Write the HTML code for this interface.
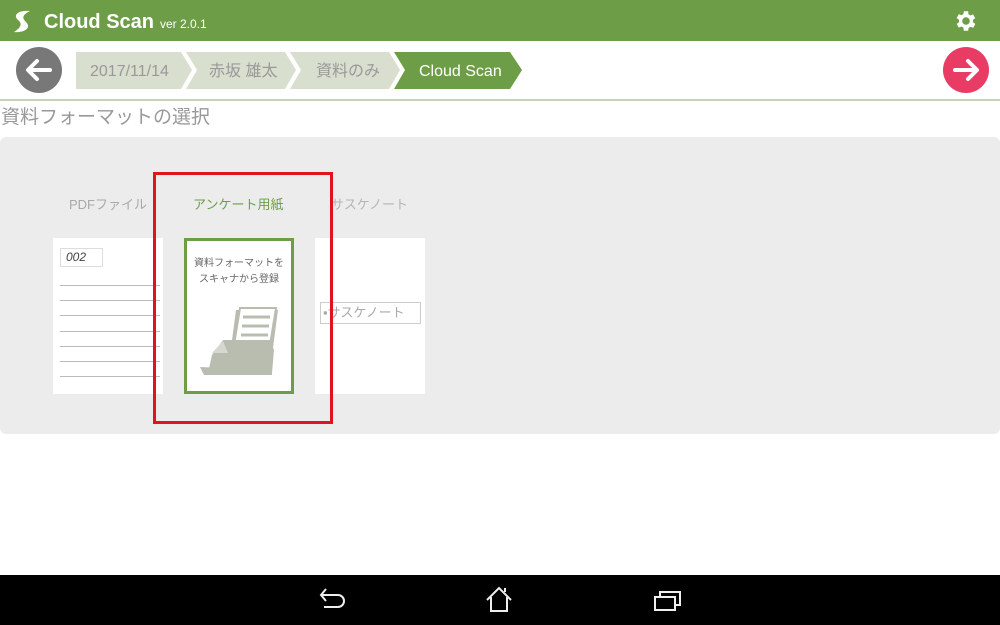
<!DOCTYPE html>
<html><head><meta charset="utf-8"><style>
*{margin:0;padding:0;box-sizing:border-box}
body{width:1000px;height:625px;position:relative;background:#fff;font-family:"Liberation Sans","Noto Sans CJK JP",sans-serif;overflow:hidden}
.abs{position:absolute}
</style></head><body>
<div class="abs" style="left:0;top:0;width:1000px;height:41px;background:#6d9e47"></div>
<svg class="abs" style="left:8px;top:9px" width="28" height="26" viewBox="0 0 28 26"><path d="M22 2 C12 1 4 5 10 11 C14 14 14 18 6 23 C16 24 24 19 18 13 C14 9 14 6 22 2Z" fill="#fff"/></svg>
<div class="abs" style="left:44px;top:10px;color:#fff;font-weight:bold;font-size:20px;line-height:24px">Cloud Scan</div>
<div class="abs" style="left:160px;top:16px;color:#fff;font-size:12px;line-height:16px">ver 2.0.1</div>
<svg class="abs" style="left:953px;top:8px" width="26" height="26" viewBox="0 0 24 24"><path fill="#fff" d="M19.4 13a7.5 7.5 0 0 0 0-2l2.1-1.6-2-3.5-2.5 1a7 7 0 0 0-1.7-1L15 3h-4l-.4 2.7a7 7 0 0 0-1.7 1l-2.5-1-2 3.5L6.6 11a7.5 7.5 0 0 0 0 2l-2.2 1.6 2 3.5 2.5-1a7 7 0 0 0 1.700 1L11 21h4l.4-2.7a7 7 0 0 0 1.7-1l2.5 1 2-3.5zM13 15.5a3.5 3.5 0 1 1 0-7 3.5 3.5 0 0 1 0 7z" transform="translate(-1 0)"/></svg>
<svg class="abs" style="left:0;top:44px" width="1000" height="60">
<circle cx="39" cy="26" r="23" fill="#787878"/>
<path d="M50 26H29M37 17l-9 9 9 9" stroke="#fff" stroke-width="4" fill="none" stroke-linecap="round" stroke-linejoin="round"/>
<polygon points="76,8 181,8 192,26 181,45 76,45" fill="#d8dfcf"/>
<polygon points="186,8 285,8 296,26 285,45 186,45 197,26" fill="#d8dfcf"/>
<polygon points="290,8 389,8 400,26 389,45 290,45 301,26" fill="#d8dfcf"/>
<polygon points="394,8 510,8 522,26 510,45 394,45 405,26" fill="#6d9e47"/>
<text x="90" y="32" font-size="16" fill="#999" font-family="Liberation Sans">2017/11/14</text>
<text x="209" y="32" font-size="16" fill="#999" font-family="Liberation Sans,Noto Sans CJK JP">赤坂 雄太</text>
<text x="316" y="32" font-size="16" fill="#999" font-family="Liberation Sans,Noto Sans CJK JP">資料のみ</text>
<text x="419" y="32" font-size="16" fill="#fff" font-family="Liberation Sans">Cloud Scan</text>
<circle cx="966" cy="26" r="23" fill="#e83c64"/>
<path d="M955 26h21M968 17l9 9-9 9" stroke="#fff" stroke-width="4" fill="none" stroke-linecap="round" stroke-linejoin="round"/>
<rect x="0" y="55" width="1000" height="2" fill="#c5d3b8"/>
</svg>
<div class="abs" style="left:1px;top:105px;font-size:19px;color:#999;line-height:26px">資料フォーマットの選択</div>
<div class="abs" style="left:0;top:137px;width:1000px;height:297px;background:#ececec;border-radius:6px"></div>
<div class="abs" style="left:69px;top:194px;font-size:13px;color:#a9a9a9">PDFファイル</div>
<div class="abs" style="left:193px;top:194px;font-size:13px;color:#6d9e47">アンケート用紙</div>
<div class="abs" style="left:331px;top:194px;font-size:13px;color:#b5b5b5">サスケノート</div>
<div class="abs" style="left:53px;top:238px;width:110px;height:156px;background:#fff"></div>
<div class="abs" style="left:60px;top:248px;width:43px;height:19px;border:1px solid #ddd;font-size:12px;font-style:italic;color:#444;padding-left:5px;line-height:17px">002</div>
<svg class="abs" style="left:60px;top:285px" width="100" height="95"><g stroke="#bbb" stroke-width="1"><line x1="0" y1="0.5" x2="100" y2="0.5"/><line x1="0" y1="15.5" x2="100" y2="15.5"/><line x1="0" y1="30.5" x2="100" y2="30.5"/><line x1="0" y1="46.5" x2="100" y2="46.5"/><line x1="0" y1="61.5" x2="100" y2="61.5"/><line x1="0" y1="76.5" x2="100" y2="76.5"/><line x1="0" y1="91.5" x2="100" y2="91.5"/></g></svg>
<div class="abs" style="left:184px;top:238px;width:110px;height:156px;background:#fff;border:3px solid #6d9e47"></div>
<div class="abs" style="left:184px;top:256px;width:110px;text-align:center;font-size:10px;color:#666;line-height:16px">資料フォーマットを<br>スキャナから登録</div>
<svg class="abs" style="left:198px;top:305px" width="84" height="72" viewBox="0 0 84 72">
<polygon points="38,5 80,5 74,50 32,50" fill="#b9bdb0"/>
<polygon points="42,3 78,3 72,40 36,40" fill="#fff" stroke="#b9bdb0" stroke-width="2"/>
<line x1="45" y1="12" x2="72" y2="12" stroke="#b9bdb0" stroke-width="3"/><line x1="44" y1="21" x2="71" y2="21" stroke="#b9bdb0" stroke-width="3"/><line x1="43" y1="30" x2="70" y2="30" stroke="#b9bdb0" stroke-width="3"/>
<polygon points="25,35 72,35 76,45 74,68 10,68 14,50" fill="#b9bdb0"/>
<polygon points="2,62 74,65 74,70 6,70" fill="#b9bdb0"/>
<polygon points="14,48 25,36 30,48" fill="#d5d8cf"/>
</svg>
<div class="abs" style="left:315px;top:238px;width:110px;height:156px;background:#fff"></div>
<div class="abs" style="left:320px;top:302px;width:101px;height:22px;border:1px solid #ccc;font-size:13px;color:#aaa;line-height:20px;padding-left:2px">▪サスケノート</div>
<div class="abs" style="left:153px;top:172px;width:180px;height:252px;border:3px solid #e0141c"></div>
<div class="abs" style="left:0;top:575px;width:1000px;height:50px;background:#000"></div>
<svg class="abs" style="left:0;top:575px" width="1000" height="50">
<g stroke="#eee" stroke-width="2" fill="none">
<path d="M322 20h16a6 6 0 0 1 0 12h-14M326 14l-5 6 5 6"/>
<path d="M487 25l12-12 12 12M491 22v14h16v-14M505 17v-4"/>
<rect x="655" y="22" width="20" height="13"/><path d="M660 22v-5h20v13h-5"/>
</g></svg>
</body></html>
